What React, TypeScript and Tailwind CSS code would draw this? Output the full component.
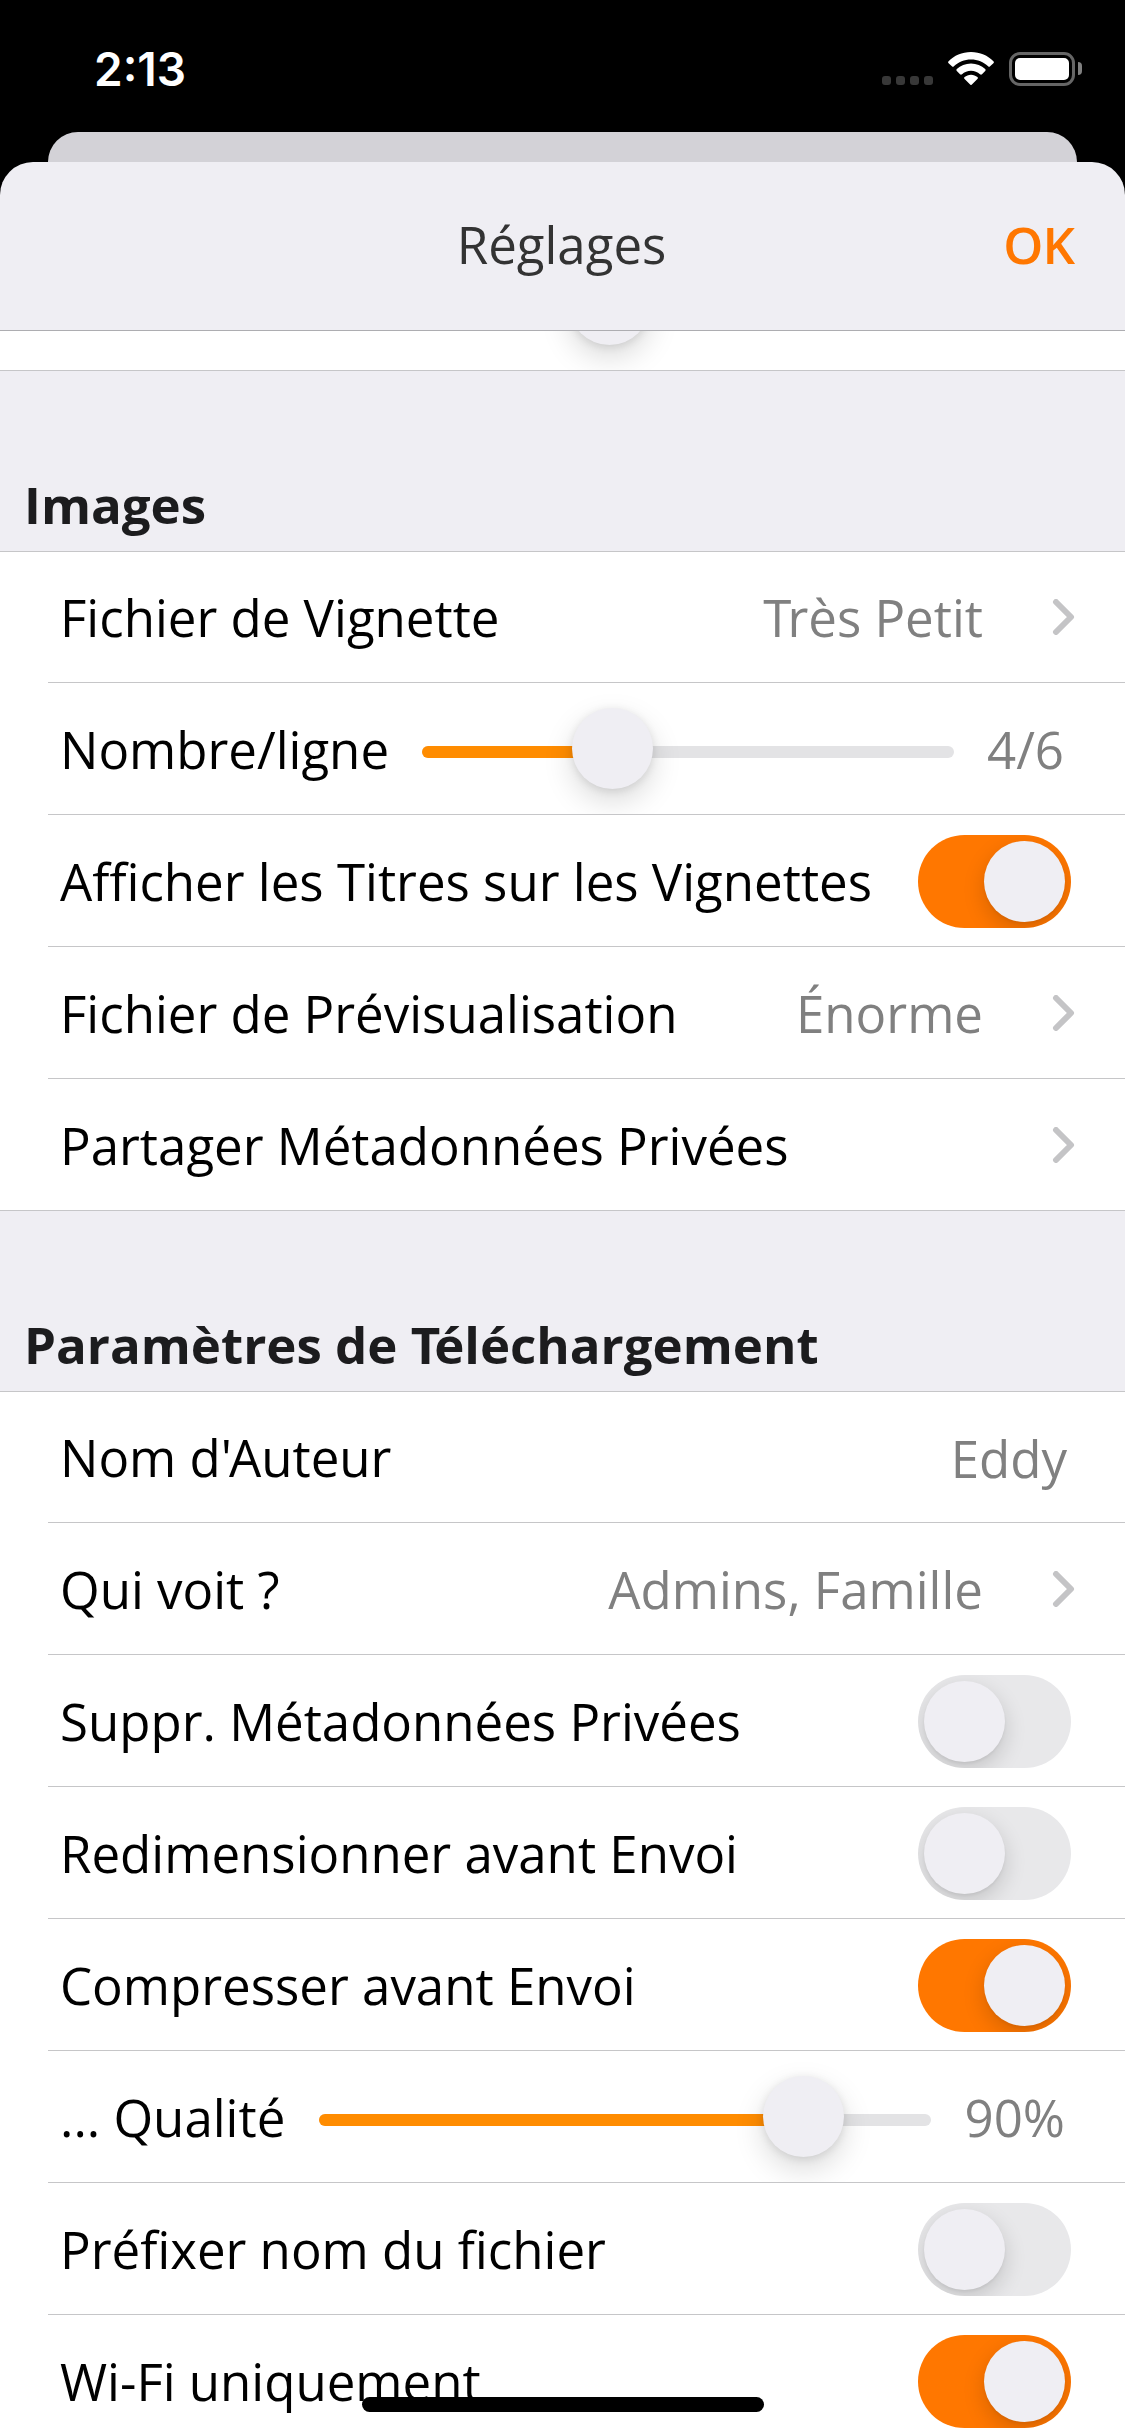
import type { ReactNode } from "react";

function StatusBar() {
  return (
    <div className="flex h-[132px] shrink-0 items-start justify-between pl-[94px] pr-[43px]">
      <span className="mt-[41px] font-['Inter'] text-[46px] leading-[56px] font-semibold text-white">2:13</span>
      <div className="mt-[52px] flex h-[34px] items-start">
        <div className="mt-[24px] flex gap-[5px]">
          {[0, 1, 2, 3].map((i) => (
            <span key={i} className="size-[9px] rounded-[3px] bg-[#383838]" />
          ))}
        </div>
        <svg className="ml-[15px]" width="46" height="33" viewBox="0 0 46 33" fill="#fff">
          <path d="M23 0C14 0 6 3.600.6 9.200a1.400 1.400 0 0 0 0 2L3.900 14.300a1.400 1.400 0 0 0 2 0C10.400 9.900 16.400 7.400 23 7.400s12.600 2.500 17.100 6.900a1.400 1.400 0 0 0 2 0l3.300-3.100a1.400 1.400 0 0 0 0-2C40 3.600 32 0 23 0Z" />
          <path d="M23 11.400c-5.500 0-10.500 2.200-14.200 5.700a1.400 1.400 0 0 0 0 2l3.200 3.100a1.500 1.500 0 0 0 2 0c2.400-2.200 5.500-3.500 9-3.500s6.600 1.300 9 3.500a1.500 1.500 0 0 0 2 0l3.200-3.100a1.400 1.400 0 0 0 0-2C33.500 13.600 28.500 11.400 23 11.400Z" />
          <path d="M23 22.700c-2.500 0-4.700.9-6.400 2.400a1.300 1.300 0 0 0 0 1.900l5.500 5.600a1.300 1.300 0 0 0 1.800 0l5.500-5.600a1.300 1.300 0 0 0 0-1.900c-1.700-1.500-3.900-2.400-6.400-2.400Z" />
        </svg>
        <div className="ml-[15px] h-[34px] w-[66px] rounded-[11px] border-3 border-[#666] p-[3px]">
          <div className="h-[22px] w-[54px] rounded-[5px] bg-white" />
        </div>
        <div className="mt-[10px] ml-[3px] h-[13px] w-[4px] rounded-r-full bg-[#808080]" />
      </div>
    </div>
  );
}

function Row({ label, children, first, last }: { label: ReactNode; children?: ReactNode; first?: boolean; last?: boolean }) {
  return (
    <div className={first ? "h-[131px] pl-[48px]" : last ? "h-[132px]" : "h-[132px] pl-[48px]"}>
      <div
        className={
          last
            ? "flex h-full items-center overflow-hidden border-b border-[#c6c6c8] pl-[60px]"
            : "flex h-full items-center overflow-hidden border-b border-[#c6c6c8] pl-[12px]"
        }
      >
        <span className="shrink-0 text-black">{label}</span>
        {children}
      </div>
    </div>
  );
}

function Link({ value }: { value?: ReactNode }) {
  return (
    <div className="ml-auto flex items-center pr-[50px] text-[#808080]">
      {value && <span>{value}</span>}
      <svg className="ml-[69px]" width="23" height="36" viewBox="0 0 23 36" fill="none" stroke="#c4c4c6" strokeWidth="6" strokeLinecap="round" strokeLinejoin="round">
        <path d="M4 3L19 18L4 33" />
      </svg>
    </div>
  );
}

function Switch({ on }: { on?: boolean }) {
  return (
    <div
      className={
        on
          ? "mt-[2px] mr-[54px] ml-auto flex h-[93px] w-[153px] items-center justify-end overflow-hidden rounded-full bg-[#ff7700] p-[6px]"
          : "mt-[2px] mr-[54px] ml-auto flex h-[93px] w-[153px] items-center overflow-hidden rounded-full bg-[#e8e8ea] p-[6px]"
      }
    >
      <span className="size-[81px] rounded-full bg-[#efeef3] shadow-[0_8px_22px_rgba(0,0,0,0.16),0_2px_3px_rgba(0,0,0,0.05)]" />
    </div>
  );
}

function Thumb() {
  return <span className="block size-[81px] shrink-0 rounded-full bg-[#efeef3] shadow-[0_12px_30px_rgba(0,0,0,0.15),0_2px_8px_rgba(0,0,0,0.1)]" />;
}

function Slider({ track, fill, value, valueBox }: { track: string; fill: string; value: string; valueBox: string }) {
  return (
    <>
      <div className={track}>
        <div className="mt-[7px] flex h-3 w-full items-center rounded-full bg-[#e3e3e5]">
          <div className={fill} />
          <div className="-mt-[7px] -ml-[6px]">
            <Thumb />
          </div>
        </div>
      </div>
      <span className={valueBox}>{value}</span>
    </>
  );
}

function SectionTitle({ children }: { children: ReactNode }) {
  return (
    <h2 className="flex h-[181px] shrink-0 items-end border-b border-[#c6c6c8] pb-[12px] pl-[24px] leading-[70px] font-bold text-[#1c1c1e]">
      <span>{children}</span>
    </h2>
  );
}

export default function App() {
  return (
    <div className="relative flex h-[2436px] w-[1125px] flex-col overflow-hidden bg-black font-['Open_Sans',sans-serif] text-[51px] leading-[70px] whitespace-nowrap">
      <StatusBar />
      <div className="mx-[48px] h-[30px] shrink-0 rounded-t-[30px] bg-[#d3d2d7]" />
      <main className="flex min-h-0 flex-1 flex-col overflow-hidden rounded-t-[33px] bg-[#efeef3]">
        <header className="grid h-[169px] shrink-0 grid-cols-3 items-center border-b border-[#adadb1] pb-[5px] text-center">
          <h1 className="col-start-2 -ml-[2px] text-[#333]">Réglages</h1>
          <button className="pr-[51px] text-right font-semibold tracking-[-1px] text-[#ff7700]">OK</button>
        </header>

        <div className="flex h-[40px] shrink-0 items-end overflow-hidden border-b border-[#c6c6c8] bg-white pb-[25px] pl-[569px]">
          <Thumb />
        </div>

        <SectionTitle>Images</SectionTitle>
        <section className="shrink-0 bg-white">
          <Row label="Fichier de Vignette" first>
            <Link
              value={
                <>
                  <span className="tracking-[-4px]">T</span>rès Petit
                </>
              }
            />
          </Row>
          <Row label="Nombre/ligne">
            <Slider
              track="ml-auto w-[532px]"
              fill="h-3 w-[156px] rounded-l-full bg-[#ff8c00]"
              value="4/6"
              valueBox="w-[171px] pr-[61px] text-right text-[#808080]"
            />
          </Row>
          <Row label="Afficher les Titres sur les Vignettes">
            <Switch on />
          </Row>
          <Row label="Fichier de Prévisualisation">
            <Link value="Énorme" />
          </Row>
          <Row label="Partager Métadonnées Privées" last>
            <Link />
          </Row>
        </section>

        <SectionTitle>
          Paramètres de <span className="tracking-[-6px]">T</span>éléchargement
        </SectionTitle>
        <section className="shrink-0 bg-white">
          <Row
            label={
              <>
                Nom d<span className="tracking-[-3px]">'</span>Auteur
              </>
            }
            first
          >
            <span className="mt-[2px] ml-auto pr-[58px] text-[#808080]">Eddy</span>
          </Row>
          <Row label="Qui voit ?">
            <Link value="Admins, Famille" />
          </Row>
          <Row label="Suppr. Métadonnées Privées">
            <Switch />
          </Row>
          <Row label="Redimensionner avant Envoi">
            <Switch />
          </Row>
          <Row label="Compresser avant Envoi">
            <Switch on />
          </Row>
          <Row label="... Qualité">
            <Slider
              track="ml-auto w-[612px]"
              fill="h-3 w-[450px] rounded-l-full bg-[#ff8c00]"
              value="90%"
              valueBox="w-[194px] pr-[60px] text-right text-[#808080]"
            />
          </Row>
          <Row label="Préfixer nom du fichier">
            <Switch />
          </Row>
          <Row label="Wi-Fi uniquement">
            <Switch on />
          </Row>
        </section>
      </main>
      <div className="absolute bottom-[24px] left-[362px] h-[15px] w-[402px] rounded-full bg-black" />
    </div>
  );
}
